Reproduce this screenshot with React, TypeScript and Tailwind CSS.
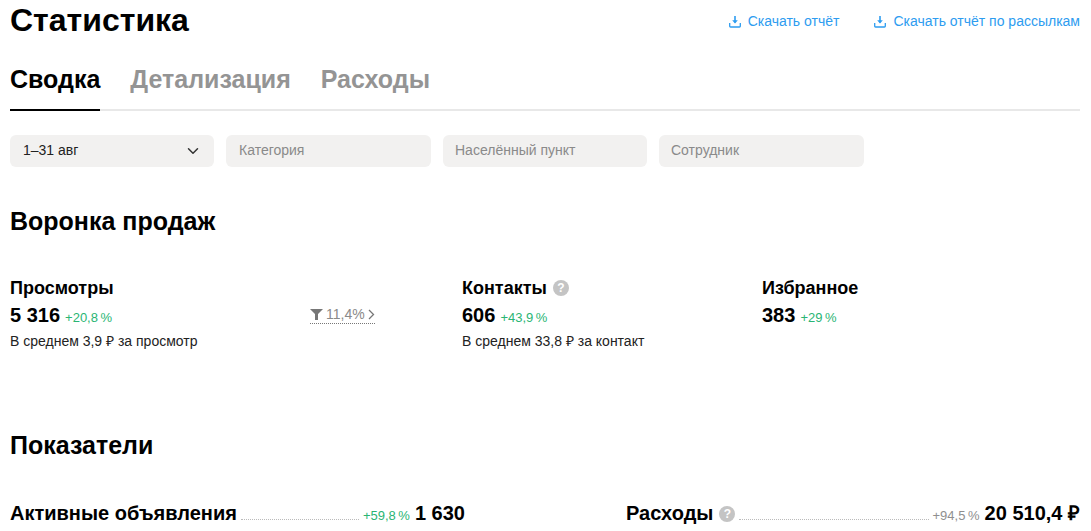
import React from 'react';
import { ChevronDown } from 'lucide-react';

function DownloadIcon() {
  return (
    <svg width="12" height="13" viewBox="0 0 12 13" fill="none" className="shrink-0">
      <path d="M6 1v6.5" stroke="#2d9cf0" strokeWidth="1.6" />
      <path d="M3.2 5.2h5.6L6 8.6z" fill="#2d9cf0" />
      <path d="M.7 8v3.2c0 .5.3.8.8.8h9c.5 0 .8-.3.8-.8V8" stroke="#2d9cf0" strokeWidth="1.3" />
    </svg>
  );
}

function HelpIcon() {
  return (
    <span className="inline-flex w-4 h-4 rounded-full bg-[#c4c4c4] text-white text-xs font-bold items-center justify-center leading-none">
      ?
    </span>
  );
}

function Growth({ value, gray }: { value: string; gray?: boolean }) {
  return <span className={`text-[13px] ${gray ? 'text-[#8f8f8f]' : 'text-[#2ab574]'}`}>{value}</span>;
}

function Metric({ title, value, growth, note, help, className }: {
  title: string;
  value: string;
  growth: string;
  note?: string;
  help?: boolean;
  className: string;
}) {
  return (
    <div className={className}>
      <div className="flex items-center gap-[6px] h-[24px] text-[18px] font-bold text-black">
        {title}
        {help && <HelpIcon />}
      </div>
      <div className="flex items-baseline gap-[5px] h-[28px]">
        <span className="text-[20px] font-bold text-black">{value}</span>
        <Growth value={growth} />
      </div>
      {note && <div className="mt-[3px] text-[14px] text-[#222] leading-[20px]">{note}</div>}
    </div>
  );
}

function StatRow({ title, growth, value, help, gray, className }: {
  title: string;
  growth: string;
  value: string;
  help?: boolean;
  gray?: boolean;
  className: string;
}) {
  return (
    <div className={`flex items-baseline ${className}`}>
      <span className="text-[20px] font-bold text-black">{title}</span>
      {help && <span className="ml-[6px] self-center"><HelpIcon /></span>}
      <span className="flex-1 mx-[4px] border-b border-dotted border-[#bbb]" />
      <Growth value={growth} gray={gray} />
      <span className="ml-[5px] text-[20px] font-bold text-black">{value}</span>
    </div>
  );
}

export default function App() {
  const filters = [
    { name: 'Категория', w: 'w-[205px] pl-[13px]' },
    { name: 'Населённый пункт', w: 'w-[204px] pl-[12px]' },
    { name: 'Сотрудник', w: 'w-[205px] pl-[12px]' },
  ];

  return (
    <div className="h-[531px] overflow-hidden bg-white pl-[10px] pr-[11px] font-['Liberation_Sans',Arial,sans-serif]">
      <div className="flex items-center justify-between h-[40px]">
        <h1 className="text-[32px] font-bold text-black">Статистика</h1>
        <div className="flex gap-[35px] pt-[2px] text-[14px] text-[#2d9cf0]">
          <a className="flex items-center gap-[7px]"><DownloadIcon />Скачать отчёт</a>
          <a className="flex items-center gap-[7px]"><DownloadIcon />Скачать отчёт по рассылкам</a>
        </div>
      </div>

      <div className="flex gap-[30px] mt-[19px] h-[52px] border-b-2 border-[#e8e8e8] text-[25px] font-bold text-[#949494]">
        <div className="h-[52px] border-b-2 border-black text-black leading-[40px]">Сводка</div>
        <div className="leading-[40px]">Детализация</div>
        <div className="leading-[40px]">Расходы</div>
      </div>

      <div className="flex gap-[12px] mt-[24px]">
        <div className="flex items-center justify-between w-[204px] h-[32px] rounded-md bg-[#f2f1f0] pl-[13px] pr-[12px] pb-[1px] text-[14px] text-[#222]">
          1–31 авг
          <ChevronDown size={18} color="#333" />
        </div>
        {filters.map((f) => (
          <div key={f.name} className={`flex items-center h-[32px] rounded-md bg-[#f2f1f0] pb-[1px] text-[14px] text-[#8a8a8a] ${f.w}`}>
            {f.name}
          </div>
        ))}
      </div>

      <h2 className="mt-[40px] text-[25px] font-bold text-black leading-[28px]">Воронка продаж</h2>

      <div className="flex mt-[41px]">
        <Metric className="w-[300px]" title="Просмотры" value="5 316" growth={'+20,8\u2009%'} note="В среднем 3,9 ₽ за просмотр" />
        <div className="w-[152px] pt-[27px]">
          <span className="inline-flex items-center border-b border-dotted border-[#777] text-[14px] leading-[17px] text-[#8a8a8a]">
            <svg width="13" height="11" viewBox="0 0 13 11" className="mr-[3px]">
              <path d="M0 0h13L8 5v6H5V5z" fill="#777" />
            </svg>
            11,4%
            <svg width="7" height="11" viewBox="0 0 7 11" fill="none" className="ml-[3px]">
              <path d="M1 1l4.5 4.5L1 10" stroke="#777" strokeWidth="1.3" />
            </svg>
          </span>
        </div>
        <Metric className="w-[300px]" title="Контакты" value="606" growth={'+43,9\u2009%'} note="В среднем 33,8 ₽ за контакт" help />
        <Metric className="flex-1" title="Избранное" value="383" growth={'+29\u2009%'} />
      </div>

      <h2 className="mt-[80px] text-[25px] font-bold text-black leading-[28px]">Показатели</h2>

      <div className="flex justify-between mt-[39px]">
        <StatRow className="w-[455px]" title="Активные объявления" growth={'+59,8\u2009%'} value="1 630" />
        <StatRow className="w-[454px]" title="Расходы" growth={'+94,5\u2009%'} value="20 510,4 ₽" help gray />
      </div>
    </div>
  );
}
